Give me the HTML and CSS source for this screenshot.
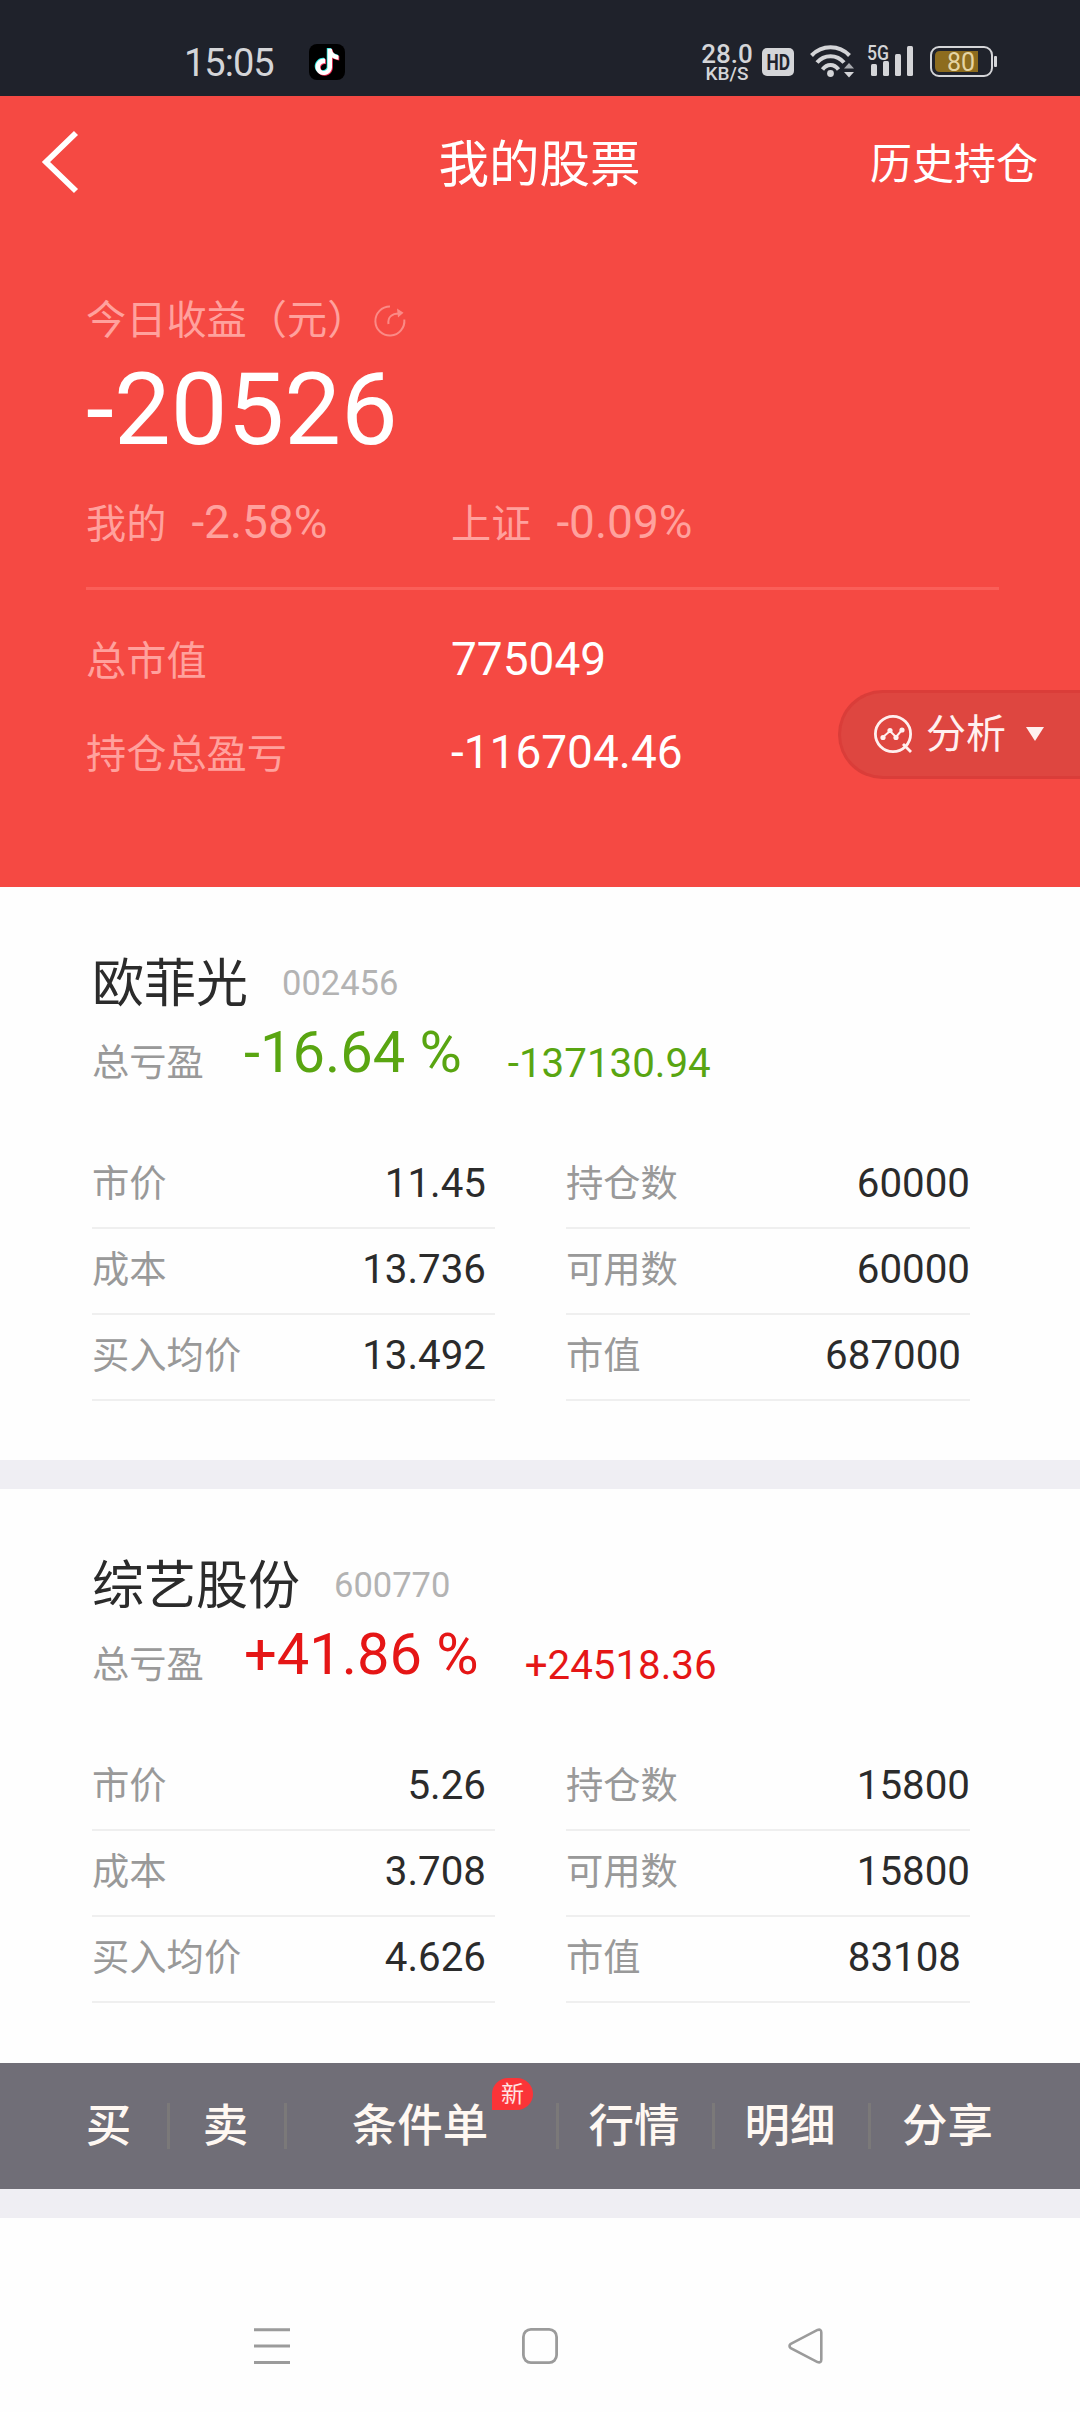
FILE: index.html
```html
<!DOCTYPE html>
<html lang="zh-CN">
<head>
    <meta charset="UTF-8">
    <meta name="viewport" content="width=device-width, initial-scale=1.0">
    <title>我的股票</title>
    <link rel="stylesheet" href="styles.css">
</head>
<body>
    <div class="statusbar">
        <span class="time">15:05</span>
        <svg class="tiktok" width="36" height="36" viewBox="0 0 36 36">
            <defs>
                <path id="note" d="M12.525.02c1.31-.02 2.61-.01 3.91-.02.08 1.53.63 3.09 1.75 4.17 1.12 1.11 2.7 1.62 4.24 1.79v4.03c-1.44-.05-2.89-.35-4.2-.97-.57-.26-1.1-.59-1.62-.93-.01 2.92.01 5.84-.02 8.75-.08 1.4-.54 2.79-1.35 3.94-1.31 1.92-3.58 3.17-5.91 3.21-1.43.08-2.86-.31-4.08-1.03-2.02-1.19-3.44-3.37-3.65-5.71-.02-.5-.03-1-.01-1.49.18-1.9 1.12-3.72 2.58-4.96 1.66-1.44 3.98-2.13 6.15-1.72.02 1.48-.04 2.96-.04 4.44-.99-.32-2.15-.23-3.02.37-.63.41-1.11 1.04-1.36 1.75-.21.51-.15 1.07-.14 1.61.24 1.64 1.82 3.02 3.5 2.87 1.12-.01 2.19-.66 2.77-1.61.19-.33.4-.67.41-1.06.1-1.79.06-3.57.07-5.36.01-4.03-.01-8.05.02-12.07z"/>
            </defs>
            <rect width="36" height="36" rx="8" fill="#000"/>
            <use href="#note" transform="translate(4 4) scale(1.1)" fill="#25e5df"/>
            <use href="#note" transform="translate(5.6 5.4) scale(1.1)" fill="#f62c54"/>
            <use href="#note" transform="translate(4.8 4.7) scale(1.1)" fill="#fff"/>
        </svg>
        <div class="speed">
            <span class="speed-num">28.0</span>
            <span class="speed-unit">KB/S</span>
        </div>
        <svg class="hd" width="32" height="36" viewBox="0 -4 32 36">
            <rect width="32" height="28" rx="5" fill="#d4d5d8"/>
            <text x="4.5" y="22" textLength="23.5" lengthAdjust="spacingAndGlyphs">HD</text>
        </svg>
        <svg class="wifi" width="46" height="36" viewBox="0 0 46 36">
            <g fill="none" stroke="#d4d5d8" stroke-width="4">
                <path d="M1.5 11.5 C12 0.5 29 0.5 39.5 11.5"/>
                <path d="M7 18.5 C14 10 27 10 34 18.5"/>
                <path d="M12.5 25.5 C17 19.5 24 19.5 28.5 25.5"/>
            </g>
            <circle cx="20.5" cy="29.5" r="3.4" fill="#d4d5d8"/>
            <path d="M34 24.5 L39 19 L44 24.5 Z" fill="#a9abb0"/>
            <path d="M34 28 L39 33.5 L44 28 Z" fill="#d4d5d8"/>
        </svg>
        <svg class="signal" width="48" height="42" viewBox="0 -6 48 42">
            <text class="net" x="0" y="15.5" textLength="22" lengthAdjust="spacingAndGlyphs">5G</text>
            <g fill="#d4d5d8">
                <rect x="4" y="20" width="6" height="12" rx="1.5"/>
                <rect x="16" y="17" width="6" height="15" rx="1.5"/>
                <rect x="28" y="10" width="6" height="22" rx="1.5"/>
                <rect x="40" y="2" width="6" height="30" rx="1.5"/>
            </g>
        </svg>
        <svg class="battery" width="68" height="32" viewBox="0 0 68 32">
            <rect x="1" y="1" width="61" height="29" rx="8" fill="none" stroke="#d4d5d8" stroke-width="2"/>
            <path d="M10 5 H48 V26 H10 Q5 26 5 21 V10 Q5 5 10 5 Z" fill="#8d6c1e"/>
            <rect x="64" y="10" width="3" height="11" rx="1" fill="#d4d5d8"/>
            <text class="level" x="31" y="24.5" text-anchor="middle">80</text>
        </svg>
    </div>

    <div class="summary">
        <div class="topbar">
            <svg class="back" width="40" height="64" viewBox="0 0 40 64">
                <path d="M35 3 L5 32 L35 61" fill="none" stroke="#fff" stroke-width="5.8"/>
            </svg>
            <h1>我的股票</h1>
            <a class="history">历史持仓</a>
        </div>
        <div class="today">
            <div class="today-label">
                <span>今日收益（元）</span>
                <svg width="34" height="34" viewBox="0 0 34 34">
                    <g fill="none" stroke="#fb8a86" stroke-width="2">
                        <path d="M17 2.5 A14.5 14.5 0 1 0 31.3 15.5"/>
                        <path d="M15.5 20 C14.5 13 19 9.5 26 9.5"/>
                    </g>
                    <path d="M24 4.5 L30.5 8.8 L25 13.5 Z" fill="#fb8a86"/>
                </svg>
            </div>
            <div class="today-value">-20526</div>
            <div class="row rates">
                <div class="col"><span class="label">我的</span><span class="rate">-2.58%</span></div>
                <div class="col"><span class="label">上证</span><span class="rate">-0.09%</span></div>
            </div>
            <div class="divider"></div>
            <div class="row">
                <span class="col label">总市值</span>
                <span class="value">775049</span>
            </div>
            <div class="row">
                <span class="col label">持仓总盈亏</span>
                <span class="value">-116704.46</span>
            </div>
        </div>
        <!-- Floating button on the right edge -->
        <div class="analyse">
            <svg width="40" height="40" viewBox="0 0 40 40">
                <g fill="none" stroke="#fff0ef" stroke-width="2.8">
                    <circle cx="20" cy="20" r="17.6"/>
                    <path d="M30 30 L38 38"/>
                    <path d="M10 23 L17 17 L23 23 L29 16" stroke-width="2"/>
                </g>
                <g fill="#fff0ef">
                    <circle cx="10" cy="23.5" r="2.6"/>
                    <circle cx="17" cy="16.5" r="2.6"/>
                    <circle cx="23" cy="23.5" r="2.6"/>
                    <circle cx="29" cy="16" r="2.6"/>
                </g>
            </svg>
            <span>分析</span>
            <div class="arrow"></div>
        </div>
    </div>

    <div class="stock">
        <div class="stock-head">
            <h2>欧菲光</h2>
            <span class="code">002456</span>
        </div>
        <div class="profit down">
            <span class="profit-label">总亏盈</span>
            <span class="percent">-16.64 %</span>
            <span class="amount">-137130.94</span>
        </div>
        <div class="stats">
            <div class="stat left"><span>市价</span><b>11.45</b></div>
            <div class="stat"><span>持仓数</span><b>60000</b></div>
            <div class="stat left"><span>成本</span><b>13.736</b></div>
            <div class="stat"><span>可用数</span><b>60000</b></div>
            <div class="stat left"><span>买入均价</span><b>13.492</b></div>
            <div class="stat left"><span>市值</span><b>687000</b></div>
        </div>
    </div>

    <div class="gap"></div>

    <div class="stock">
        <div class="stock-head">
            <h2>综艺股份</h2>
            <span class="code">600770</span>
        </div>
        <div class="profit up">
            <span class="profit-label">总亏盈</span>
            <span class="percent">+41.86 %</span>
            <span class="amount">+24518.36</span>
        </div>
        <div class="stats">
            <div class="stat left"><span>市价</span><b>5.26</b></div>
            <div class="stat"><span>持仓数</span><b>15800</b></div>
            <div class="stat left"><span>成本</span><b>3.708</b></div>
            <div class="stat"><span>可用数</span><b>15800</b></div>
            <div class="stat left"><span>买入均价</span><b>4.626</b></div>
            <div class="stat left"><span>市值</span><b>83108</b></div>
        </div>
    </div>

    <div class="actions">
        <div class="action">买</div>
        <div class="action">卖</div>
        <div class="action order">条件单<span class="badge">新</span></div>
        <div class="action wide">行情</div>
        <div class="action wide">明细</div>
        <div class="action wide">分享</div>
    </div>

    <div class="gap"></div>

    <div class="navbar">
        <svg width="36" height="36" viewBox="0 0 36 36">
            <path d="M0 1.7 H36 M0 18 H36 M0 34.4 H36" stroke="#9b9b9b" stroke-width="3"/>
        </svg>
        <svg width="36" height="36" viewBox="0 0 36 36">
            <rect x="1.4" y="1.4" width="33.2" height="33.2" rx="7.5" fill="none" stroke="#9b9b9b" stroke-width="2.8"/>
        </svg>
        <svg class="nav-back" width="36" height="36" viewBox="0 0 36 36">
            <path d="M2.8 15.8 L29.5 1.9 Q33.3 0.7 33.3 4.5 V31.5 Q33.3 35.3 29.5 34.1 L2.8 20.2 Q0.2 18 2.8 15.8 Z" fill="none" stroke="#9b9b9b" stroke-width="2.6"/>
        </svg>
    </div>
</body>
</html>
```

FILE: styles.css
```css
*{
    margin: 0;
    padding: 0;
    box-sizing: border-box;
}
body{
    width: 1080px;
    height: 2412px;
    overflow: hidden;
    background-color: #fefefe;
    font-family: Roboto, "Noto Sans CJK SC", sans-serif;
    line-height: 1.2;
}
svg{
    display: block;
    flex-shrink: 0;
}

/* phone status bar */
.statusbar{
    display: flex;
    align-items: flex-start;
    height: 96px;
    padding: 44px 0 0 184px;
    background-color: #1f222b;
    color: #d4d5d8;
}
.time{
    width: 125px;
    font-size: 38px;
    line-height: 38px;
    letter-spacing: -1px;
}
.speed{
    width: 60px;
    margin-left: 352px;
    display: flex;
    flex-direction: column;
    align-items: center;
    font-weight: 500;
}
.speed-num{
    font-size: 26px;
    line-height: 20px;
}
.speed-unit{
    margin-top: 1px;
    font-size: 19px;
    line-height: 18px;
}
.hd{
    margin: 0 16px 0 5px;
    fill: #1f222b;
    font-size: 22.5px;
    font-weight: 700;
}
.signal{
    margin: -6px 0 0 11px;
}
.net{
    font-size: 21px;
    font-weight: 500;
    fill: #d4d5d8;
}
.battery{
    margin: 2px 0 0 15px;
}
.level{
    font-size: 25px;
    fill: #e5d4a4;
}

/* red summary */
.summary{
    position: relative;
    height: 791px;
    background-color: #f54943;
    color: #fff;
}
.topbar{
    display: grid;
    grid-template-columns: 1fr auto 1fr;
    align-items: center;
    height: 138px;
    padding: 0 42px 0 41px;
}
.back{
    margin-top: -6px;
}
h1{
    font-size: 50.5px;
    font-weight: 400;
}
.history{
    justify-self: end;
    font-size: 42px;
}
.today{
    padding: 63px 81px 0 86px;
}
.today-label{
    display: flex;
    align-items: center;
    gap: 6px;
    font-size: 40.2px;
    line-height: 48px;
    color: #ffa19d;
}
.today-value{
    margin-top: 15px;
    font-size: 101px;
    line-height: 100px;
}
.row{
    display: flex;
    align-items: center;
    height: 60px;
    margin-bottom: 32px;
    font-size: 46px;
}
.rates{
    margin: 33px 0 34px;
}
.col{
    display: flex;
    align-items: center;
    width: 365px;
}
.label{
    padding-top: 4px;
    font-size: 40.2px;
    color: #ffa19d;
}
.rate{
    margin-left: 25px;
    color: #ffa19d;
}
.divider{
    height: 3px;
    margin-bottom: 40px;
    background-color: #fa5f59;
}
.divider + .row{
    margin-bottom: 33px;
}
.analyse{
    position: absolute;
    top: 594px;
    right: 0;
    display: flex;
    align-items: center;
    width: 242px;
    height: 89px;
    padding: 0 0 2px 32px;
    border: 3px solid #da3d39;
    border-right: 0;
    border-radius: 45px 0 0 45px;
    background-color: #de4640;
    color: #fff0ef;
    font-size: 40px;
}
.analyse span{
    margin: 2px 20px 0 13px;
}
.arrow{
    border-left: 9px solid transparent;
    border-right: 9px solid transparent;
    border-top: 14px solid #fff0ef;
}

/* holdings */
.stock{
    height: 573px;
    padding: 68px 110px 0 92px;
    background-color: #fefefe;
    color: #2b2b2b;
}
.stock-head{
    display: flex;
    align-items: center;
    gap: 34px;
    height: 60px;
}
h2{
    font-size: 52px;
    font-weight: 400;
}
.code{
    padding-bottom: 3px;
    font-size: 34.5px;
    color: #b3b3b3;
}
.profit{
    display: flex;
    align-items: center;
    height: 76px;
    margin-bottom: 52px;
}
.profit-label{
    width: 152px;
    padding-top: 21px;
    font-size: 37.3px;
    color: #999;
}
.percent{
    font-size: 57.8px;
}
.amount{
    margin-left: 46px;
    padding-top: 22px;
    font-size: 40.3px;
}
.down{
    color: #59a511;
}
.up{
    color: #e51616;
}
.stats{
    display: grid;
    grid-template-columns: 403px 404px;
    column-gap: 71px;
}
.stat{
    display: flex;
    align-items: center;
    justify-content: space-between;
    height: 86px;
    padding-bottom: 2px;
    border-bottom: 2px solid #efefef;
    font-size: 37.3px;
    color: #999;
}
.stat b{
    font-size: 40.3px;
    font-weight: 400;
    color: #2b2b2b;
}
.left{
    padding-right: 9px;
}
.gap{
    height: 29px;
    background-color: #efeef3;
}
.gap + .stock{
    height: 574px;
}

/* action bar */
.actions{
    display: flex;
    align-items: center;
    height: 126px;
    padding: 0 0 1px 53px;
    background-color: #706e77;
    color: #fff8f2;
}
.action{
    position: relative;
    display: flex;
    align-items: center;
    justify-content: center;
    width: 117px;
    height: 46px;
    padding: 3px 3px 0 0;
    border-right: 3px solid #7b7979;
    font-size: 45.5px;
    font-weight: 500;
}
.order{
    width: 272px;
}
.wide{
    width: 156px;
}
.action:last-child{
    border-right: 0;
}
.badge{
    position: absolute;
    top: -25px;
    left: 205px;
    width: 41px;
    height: 32px;
    border-radius: 16px 16px 16px 0;
    background-color: #fb3438;
    color: #ffe3e3;
    font-size: 23px;
    font-weight: 400;
    line-height: 34px;
    text-align: center;
}

/* system navigation */
.navbar{
    display: flex;
    justify-content: center;
    gap: 232px;
    padding-top: 110px;
}
.nav-back{
    margin: 0 2px 0 -2px;
}
```
